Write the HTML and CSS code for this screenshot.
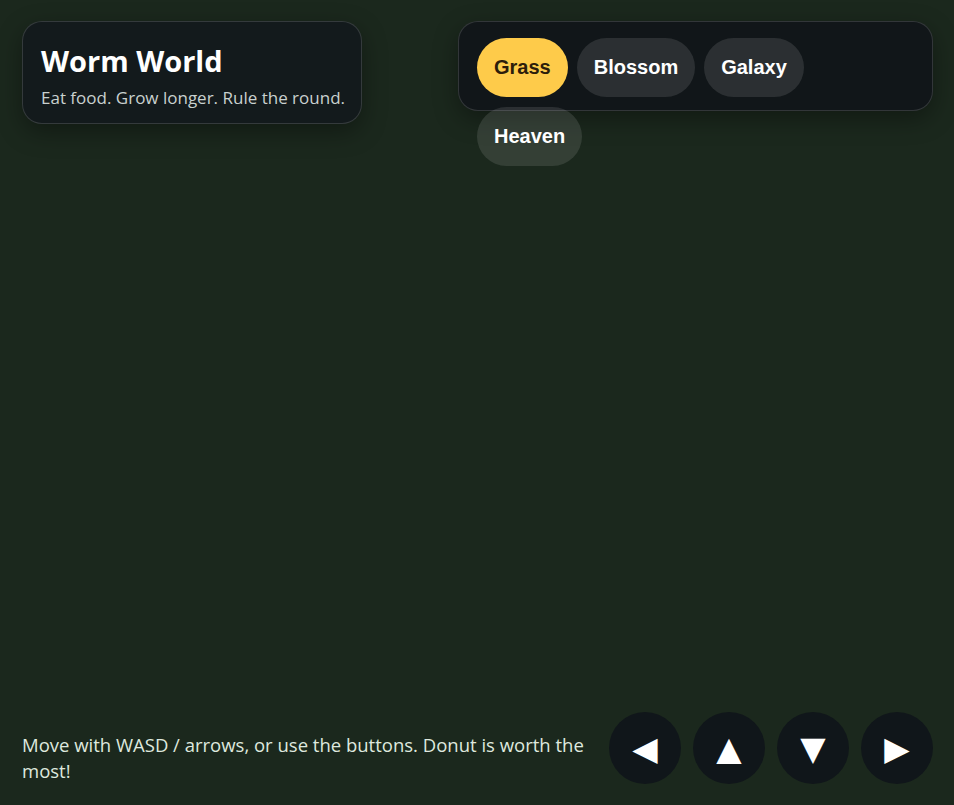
FILE: index.html
```
<!DOCTYPE html>
<html lang="en">
<head>
  <meta charset="UTF-8">
  <meta name="viewport" content="width=device-width, initial-scale=1.0">
  <title>Worm World</title>
  <link rel="stylesheet" href="styles.css">
</head>
<body>
  <div class="game">
    <div class="top">
      <div class="card title-card">
        <h1>Worm World</h1>
        <p>Eat food. Grow longer. Rule the round.</p>
      </div>

      <!-- theme picker -->
      <div class="card themes">
        <button class="theme active">Grass</button>
        <button class="theme">Blossom</button>
        <button class="theme">Galaxy</button>
        <button class="theme">Heaven</button>
      </div>
    </div>

    <div class="field"></div>

    <div class="bottom">
      <p class="help">Move with WASD / arrows, or use the buttons. Donut is worth the most!</p>
      <div class="pad">
        <button class="dir">&#9664;</button>
        <button class="dir">&#9650;</button>
        <button class="dir">&#9660;</button>
        <button class="dir">&#9654;</button>
      </div>
    </div>
  </div>
</body>
</html>
```

FILE: styles.css
```
html,
body {
  margin: 0;
  width: 100%;
  height: 100%;
}
body {
  background: #1b281d;
  color: #fff;
  font-family: "Open Sans", "Noto Sans", sans-serif;
}
button {
  border: 0;
  cursor: pointer;
}

.game {
  box-sizing: border-box;
  height: 100%;
  padding: 21px 21px 21px 22px;
  display: flex;
  flex-direction: column;
}

.top {
  display: flex;
  justify-content: space-between;
  align-items: flex-start;
}
.card {
  background: #131a1c;
  border: 1px solid rgba(255, 255, 255, 0.14);
  border-radius: 20px;
  box-shadow: 0 8px 24px rgba(0, 0, 0, 0.35);
  box-sizing: border-box;
}
.title-card {
  width: 340px;
  padding: 21px 14px 14px 18px;
}
.title-card h1 {
  margin: 0 0 7px;
  font-size: 29px;
  line-height: 36px;
  font-weight: 700;
}
.title-card p {
  margin: 0;
  font-size: 17px;
  line-height: 23px;
  white-space: nowrap;
  color: #c9d1cf;
}

.themes {
  width: 475px;
  height: 90px;
  padding: 16px 22px 16px 18px;
  display: flex;
  flex-wrap: wrap;
  align-content: flex-start;
  gap: 10px 9px;
  background: #111619;
}
.theme {
  height: 59px;
  padding: 0 17px;
  border-radius: 30px;
  background: rgba(255, 255, 255, 0.11);
  color: #fff;
  font-family: "Liberation Sans", Arial, sans-serif;
  font-weight: 700;
  font-size: 20px;
}
.theme.active {
  background: #fecb4a;
  color: #2c1d0b;
}

.field {
  flex: 1;
}

.bottom {
  display: flex;
  align-items: flex-end;
  justify-content: space-between;
  gap: 24px;
}
.help {
  margin: 0;
  font-size: 18.5px;
  line-height: 26px;
  color: #dfe8df;
}
.pad {
  display: flex;
  gap: 12px;
  flex-shrink: 0;
}
.dir {
  width: 72px;
  height: 72px;
  border-radius: 50%;
  background: #10161a;
  color: #fff;
  font-size: 33px;
  line-height: 1;
  padding: 0;
  font-family: "DejaVu Sans", sans-serif;
}
```
